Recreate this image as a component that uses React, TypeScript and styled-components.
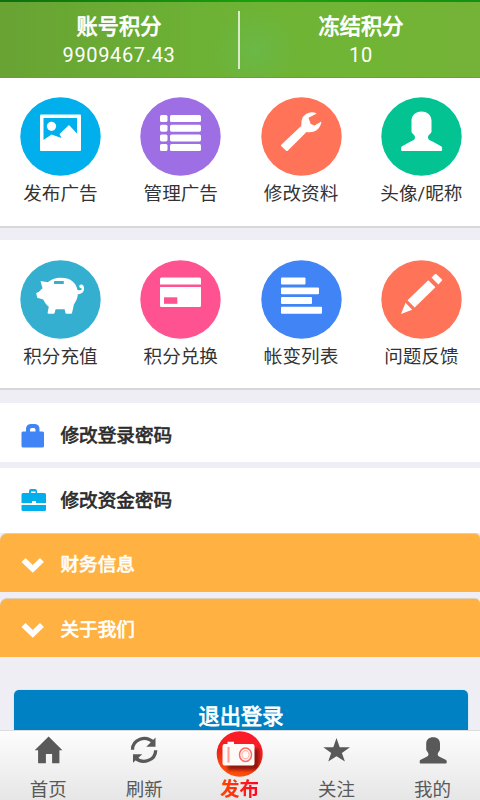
import React from 'react';
import styled, { createGlobalStyle } from 'styled-components';

const GlobalStyle = createGlobalStyle`
  * { box-sizing: border-box; }
  html, body { margin: 0; padding: 0; }
  body {
    overflow: hidden;
    background: #efeef4;
    font-family: Roboto, "Noto Sans CJK SC", sans-serif;
    color: #333;
  }
`;

const Screen = styled.div`
  width: 480px;
  height: 800px;
  display: flex;
  flex-direction: column;
  overflow: hidden;
  background: #efeef4;
`;

const Content = styled.main`
  height: 730px;
  flex: none;
  overflow: hidden;
`;

const Header = styled.header`
  display: flex;
  height: 78px;
  border-style: solid;
  border-image: linear-gradient(90deg, #0c7010, #1da00f 55%, #159014) 1;
  border-width: 2px 0 0;
  background:
    radial-gradient(circle at 255px 48px, rgba(104, 190, 90, 0.5), transparent 42px),
    linear-gradient(90deg, #68a333 0%, #6db235 45%, #70b534 75%, #75b238 100%);
  box-shadow: inset 0 -1px 0 #62a630;
`;

const Stat = styled.div<{ $shift: number }>`
  flex: 1;
  padding: 9px 0 0 ${(p) => p.$shift}px;
  text-align: center;
  color: #fff;
`;

const StatTitle = styled.div`
  height: 31px;
  font-size: 21.2px;
  line-height: 32px;
  -webkit-text-stroke: 0.8px currentColor;
`;

const StatValue = styled.div`
  height: 26px;
  font-size: 20px;
  line-height: 26px;
  letter-spacing: 0.65px;
`;

const Divider = styled.div`
  width: 2px;
  height: 58px;
  margin-top: 9px;
  background: #d9ecc9;
`;

const Panel = styled.section<{ $top: number; $iconTop: number }>`
  display: grid;
  grid-template-columns: repeat(4, 120.3px);
  height: 150px;
  margin-top: ${(p) => p.$top}px;
  padding: ${(p) => p.$iconTop}px 0 0 0.3px;
  overflow: hidden;
  background: #fff;
  border-bottom: 2px solid #d7d7d8;
`;

const Tile = styled.div`
  display: flex;
  flex-direction: column;
  align-items: center;
  svg { display: block; }
`;

const TileLabel = styled.span`
  height: 30px;
  margin-top: 3px;
  font-size: 18.6px;
  line-height: 30px;
  white-space: nowrap;
`;

const Row = styled.div<{ $height: number; $gap: number; $pad: number; $orange?: boolean }>`
  display: flex;
  align-items: center;
  height: ${(p) => p.$height}px;
  margin-top: ${(p) => p.$gap}px;
  padding: ${(p) => p.$pad}px 0 0 20px;
  background: ${(p) => (p.$orange ? '#ffb141' : '#fff')};
  color: ${(p) => (p.$orange ? '#fff' : '#2b2b2b')};
  border-radius: ${(p) => (p.$orange ? '7px 5px 0 0' : '0')};
  box-shadow: ${(p) => (p.$orange ? '0 -1px 0 #e0cfb8' : 'none')};
  svg { flex: none; }
`;

const RowLabel = styled.span`
  margin-left: 11.5px;
  font-size: 18.6px;
  line-height: 30px;
  -webkit-text-stroke: 0.7px currentColor;
`;

const LogoutButton = styled.button`
  display: block;
  width: 454px;
  height: 60px;
  margin: 33px 0 0 14px;
  padding: 0 0 6px;
  border: 0;
  border-radius: 5px;
  background: #0081c3;
  box-shadow: 0 0 0 1px #dcebf3;
  color: #fff;
  font-family: inherit;
  font-size: 21.2px;
  line-height: 32px;
  -webkit-text-stroke: 0.8px currentColor;
`;

const NavBar = styled.nav`
  display: grid;
  grid-template-columns: repeat(5, 96.1px);
  flex: none;
  height: 70px;
  padding-left: 0.2px;
  overflow: hidden;
  border-top: 1px solid #dcdcdc;
  background: linear-gradient(#fdfdfd, #e6e6e6);
`;

const NavItem = styled.div`
  display: flex;
  flex-direction: column;
  align-items: center;
  color: #595959;
  svg { display: block; flex: none; }
`;

const IconSlot = styled.div`
  height: 47px;
`;

const NavLabel = styled.span`
  font-size: 18.5px;
  line-height: 24px;
`;

const ActiveLabel = styled.span`
  margin-right: 2px;
  font-size: 19.5px;
  line-height: 24px;
  font-weight: 700;
  background: linear-gradient(90deg, #ff4a00, #ff0025);
  background-clip: text;
  color: transparent;
`;

function Disc({ color, children }: { color: string; children: React.ReactNode }) {
  return (
    <svg width="81" height="79" viewBox="0 0 81 79">
      <ellipse cx="40.5" cy="39.5" rx="40.2" ry="39.3" fill={color} />
      <g fill="#fff">{children}</g>
    </svg>
  );
}

interface TileData { label: string; color: string; art: React.ReactNode }

const adTiles: TileData[] = [
  {
    label: '发布广告', color: '#00afec',
    art: (
      <>
        <path fillRule="evenodd" d="M21 17.5h39q1 0 1 1v34.500q0 1-1 1H21q-1 0-1-1V18.500q0-1 1-1ZM23.500 21v22l8-5.500 10 3.500-2-4L49 28l8 8.500V21Z" />
        <circle cx="31.500" cy="29.300" r="4.600" />
      </>
    ),
  },
  {
    label: '管理广告', color: '#9e6ee5',
    art: (
      <>
        {[18, 27.700, 37.400, 47].map((y) => (
          <g key={y}>
            <rect x="20" y={y} width="7.500" height="7" rx="1.600" />
            <rect x="30" y={y} width="31" height="7" rx="1.600" />
          </g>
        ))}
      </>
    ),
  },
  {
    label: '修改资料', color: '#ff7359',
    art: <path d="M55.800 16.500c-6-3.300-14.500.3-15.300 8-.2 2 .2 3.700-.4 4.400L20.300 47.800c-.4.500-.4 1 0 1.400l4.800 4.500c.5.500 1.100.5 1.600 0L45.500 35c3.800.7 8.500.2 11.500-3 2-2.200 3.500-5 3.300-7.500l-6.800 3.900-3.800-1.500-2.200-6.200Z" />,
  },
  {
    label: '头像/昵称', color: '#04c393',
    art: <path d="M40.500 14.500c-6.400 0-10 4.300-10 9.500v10.500c0 2.200 3.500 3 3.500 6 0 2-1.500 2.700-3.500 3.600l-9.400 5.200c-.7.400-1 .8-1 1.500V53q0 1 1 1h39q1 0 1-1v-2.200c0-.7-.3-1.100-1-1.500l-9.500-5.200c-2-1-3.600-1.700-3.600-3.600 0-3 3.500-3.800 3.500-6V24c0-5.200-3.600-9.500-10-9.500Z" />,
  },
];

const pointTiles: TileData[] = [
  {
    label: '积分充值', color: '#35afd0',
    art: (
      <>
        <path d="M20.500 21l7.500 1.200c2.500-2.500 7.500-4.500 13-4.500 9 0 15 4.500 16.500 12.300 3 .8 4.200-.2 4.400-1.500-3.200 0-3.400-3.900-.7-3.900 3.900 0 4 7.600-.3 9-1.200.6-2 .6-3 .5-.5 5.500-2.800 8.500-4 10.400l-1.200 5.500-.7 3q-.2.800-1 .8h-4.600q-.8 0-1-.8l-.8-3.700h-9l-1 3.700q-.2.800-1 .8h-5.200q-1 0-.8-1l1.200-6c-2.500-2-4.200-4.500-5.600-7.300l-6-1.700-1-4.700 2.500-1.200 3.800-3.600Z" />
        <rect x="34" y="21" width="9.800" height="3" rx=".5" fill="#35afd0" />
      </>
    ),
  },
  {
    label: '积分兑换', color: '#ff5391',
    art: (
      <>
        <path d="M21.500 17.500h38q1.500 0 1.500 1.500v5.500H20V19q0-1.500 1.500-1.500ZM20 27h41v18.500q0 1.500-1.500 1.500h-38q-1.500 0-1.500-1.500Z" />
        <rect x="24" y="37.300" width="13.300" height="6.500" fill="#ff5391" />
      </>
    ),
  },
  {
    label: '帐变列表', color: '#4184f5',
    art: (
      <>
        <rect x="20" y="17.500" width="24.500" height="7" rx="1" />
        <rect x="20" y="27.500" width="38" height="6.700" rx="1" />
        <rect x="20" y="37" width="31" height="7" rx="1" />
        <rect x="20" y="46.800" width="41" height="7" rx="1" />
      </>
    ),
  },
  {
    label: '问题反馈', color: '#ff7359',
    art: <path d="M20 54l4.500-11.300 6.700 7Zm6.500-13.700L47.300 20.200l7.100 7-20.700 20.200ZM50.500 17.500l3-3c.7-.7 1.400-.8 2.200-.1l4.800 4.500c.8.800.8 1.500.1 2.200l-3.200 3.300Z" />,
  },
];

function TilePanel({ tiles, top, iconTop }: { tiles: TileData[]; top: number; iconTop: number }) {
  return (
    <Panel $top={top} $iconTop={iconTop}>
      {tiles.map((t) => (
        <Tile key={t.label}>
          <Disc color={t.color}>{t.art}</Disc>
          <TileLabel>{t.label}</TileLabel>
        </Tile>
      ))}
    </Panel>
  );
}

const LockIcon = () => (
  <svg width="29" height="26" viewBox="0 0 29 26">
    <path fill="#4184f5" fillRule="evenodd" d="M3 8.500h3V6q0-4.500 4.500-5h4.500q4.500.5 4.500 5v2.500h3q1.500 0 1.500 1.500v13q0 1.500-1.500 1.500H3q-1.500 0-1.500-1.500V10Q1.500 8.500 3 8.500Zm7 0h5.500V6.700q0-1.700-1.500-1.700h-2.500Q10 5 10 6.700Z" />
  </svg>
);

const BriefcaseIcon = () => (
  <svg width="29" height="26" viewBox="0 0 29 26">
    <path fill="#00afec" fillRule="evenodd" d="M3 5h6V3q0-2 2-2h4q2 0 2 2v2h7.500Q26 5 26 6.500V15h-10v-2h-4v2H1.500V6.500Q1.500 5 3 5Zm8 0h4.500V3.500H11ZM1.500 17H26v4.500q0 1.500-1.500 1.500H3q-1.500 0-1.500-1.500Z" />
  </svg>
);

const ChevronIcon = () => (
  <svg width="29" height="26" viewBox="0 0 29 26">
    <path fill="#fff" d="M1.500 9.900l4-3.800 7.300 6.900 7.200-6.900 3.900 3.800-11.100 10.800Z" />
  </svg>
);

const HomeIcon = () => (
  <svg width="34" height="34" viewBox="0 0 34 34">
    <path fill="#595959" d="M17.600 5.600L31.400 19.200h-3v13h-7.300V23h-6.200v9.200H7.100v-13H3.700Z" />
  </svg>
);

const RefreshIcon = () => (
  <svg width="34" height="34" viewBox="0 0 34 34">
    <g fill="none" stroke="#595959" strokeWidth="3.300">
      <path d="M5.500 18.800C5.500 8.500 18.500 3.500 26.500 11.500M28.700 19.200C28.500 29.500 15.500 34 8 26.500" />
    </g>
    <path fill="#595959" d="M28.500 6.500v9.200h-9.200ZM6 31.800v-8.600h9.200Z" />
  </svg>
);

const StarIcon = () => (
  <svg width="34" height="34" viewBox="0 0 34 34">
    <path fill="#595959" d="M16.500 7l3.200 9.200H30l-8.100 5.900 3 8.500-8.400-5.300-8.300 5.300 3-8.500L3.300 16.200h10Z" />
  </svg>
);

const PersonIcon = () => (
  <svg width="34" height="34" viewBox="0 0 34 34">
    <path fill="#595959" d="M17.200 6.300c-4.500 0-7 2.700-7 6.300v5.900c.2 1.800 2.300 2.800 2.300 5 0 1.300-1 1.900-2.300 2.500l-5.500 2.800c-.8.500-1 .9-1 1.500v1.200q0 .9.900.9h25.200q.9 0 .9-.9v-1.200c0-.6-.3-1-1-1.500L24 26c-1.300-.6-2.300-1.200-2.300-2.500 0-2.200 2.100-3.200 2.300-5v-5.900c0-3.600-2.500-6.300-6.800-6.300Z" />
  </svg>
);

const CameraIcon = () => (
  <svg width="48" height="46" viewBox="0 0 48 46">
    <defs>
      <linearGradient id="badge" x1="0.65" y1="0" x2="0.4" y2="1">
        <stop offset="0" stopColor="#ff1830" />
        <stop offset="0.55" stopColor="#ee2417" />
        <stop offset="1" stopColor="#ff5509" />
      </linearGradient>
      <filter id="soft" x="-30%" y="-30%" width="160%" height="160%">
        <feGaussianBlur stdDeviation="1.8" />
      </filter>
      <clipPath id="round"><ellipse cx="23.700" cy="23" rx="22.700" ry="22.500" /></clipPath>
    </defs>
    <ellipse cx="23.700" cy="23" rx="23" ry="22.800" fill="url(#badge)" />
    <g clipPath="url(#round)">
      <rect x="12" y="18" width="31" height="21" fill="#74110c" opacity="0.75" filter="url(#soft)" />
    </g>
    <path fill="#fff9f8" d="M8.500 13h3v-2.300h6.500V13h18.500q2 0 2 2v17.500q0 2-2 2h-28q-2 0-2-2V15q0-2 2-2Z" />
    <path stroke="#ff9b95" strokeWidth="2" d="M12.500 16v15.500" />
    <ellipse cx="29.500" cy="23.700" rx="6" ry="6.700" fill="none" stroke="#ff6861" strokeWidth="1.500" />
    <ellipse cx="29.500" cy="23.700" rx="3.600" ry="4" fill="none" stroke="#ffb5ae" strokeWidth="1.200" />
  </svg>
);

const navItems = [
  { label: '首页', icon: <HomeIcon /> },
  { label: '刷新', icon: <RefreshIcon /> },
  { label: '发布', icon: <CameraIcon />, active: true },
  { label: '关注', icon: <StarIcon /> },
  { label: '我的', icon: <PersonIcon /> },
];

export default function App() {
  return (
    <>
      <GlobalStyle />
      <Screen>
        <Content>
          <Header>
            <Stat $shift={0}>
              <StatTitle>账号积分</StatTitle>
              <StatValue>9909467.43</StatValue>
            </Stat>
            <Divider />
            <Stat $shift={2}>
              <StatTitle>冻结积分</StatTitle>
              <StatValue>10</StatValue>
            </Stat>
          </Header>
          <TilePanel tiles={adTiles} top={0} iconTop={19} />
          <TilePanel tiles={pointTiles} top={12} iconTop={20} />
          <Row $height={59} $gap={13} $pad={6}>
            <LockIcon />
            <RowLabel>修改登录密码</RowLabel>
          </Row>
          <Row $height={65} $gap={6} $pad={0}>
            <BriefcaseIcon />
            <RowLabel>修改资金密码</RowLabel>
          </Row>
          <Row $height={58} $gap={1} $pad={4} $orange>
            <ChevronIcon />
            <RowLabel>财务信息</RowLabel>
          </Row>
          <Row $height={58} $gap={7} $pad={4} $orange>
            <ChevronIcon />
            <RowLabel>关于我们</RowLabel>
          </Row>
          <LogoutButton>退出登录</LogoutButton>
        </Content>
        <NavBar>
          {navItems.map((item) => (
            <NavItem key={item.label}>
              <IconSlot>{item.icon}</IconSlot>
              {item.active ? <ActiveLabel>{item.label}</ActiveLabel> : <NavLabel>{item.label}</NavLabel>}
            </NavItem>
          ))}
        </NavBar>
      </Screen>
    </>
  );
}
